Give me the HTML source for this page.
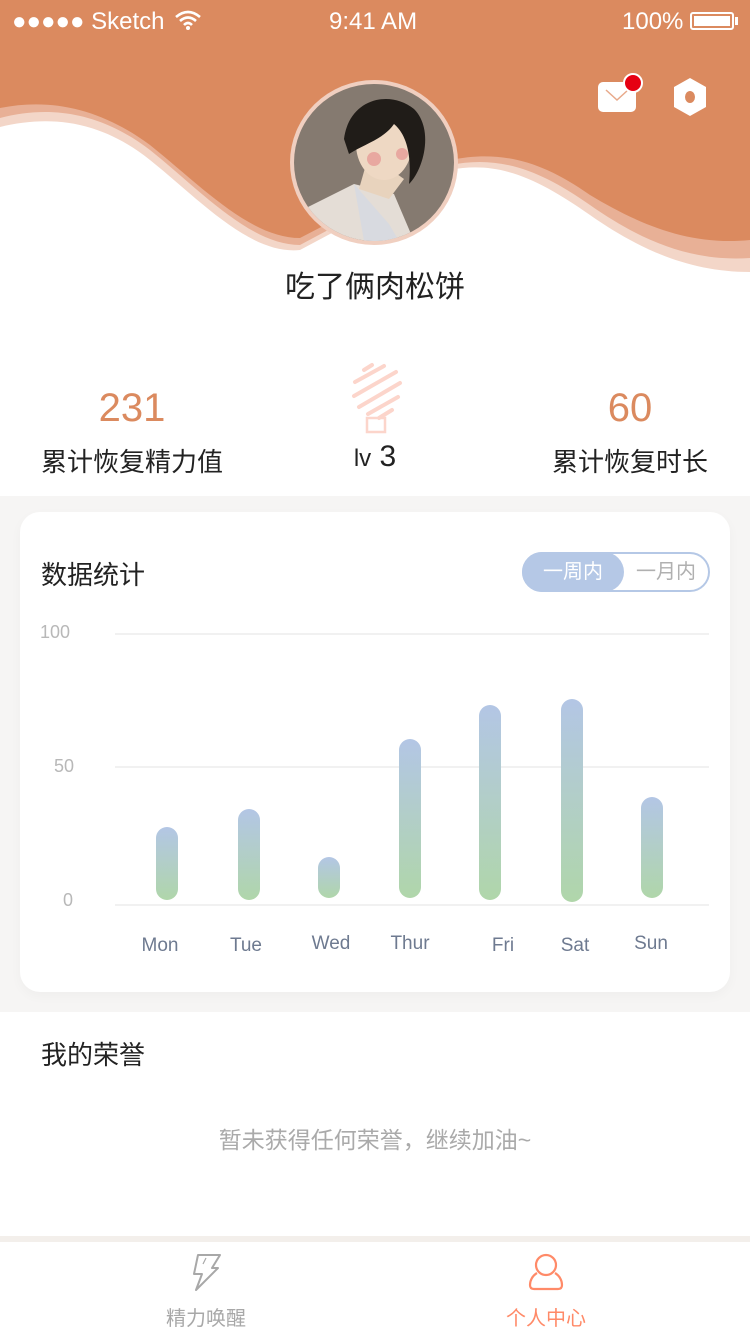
<!DOCTYPE html>
<html><head><meta charset="utf-8"><style>
*{margin:0;padding:0;box-sizing:border-box}
body{width:750px;height:1334px;position:relative;background:#fff;font-family:"Liberation Sans","Noto Sans CJK SC",sans-serif;overflow:hidden}
.abs{position:absolute}
.sb{color:#fff;font-size:24px;top:8px}
.bar{position:absolute;width:22px;border-radius:11px;background:linear-gradient(#b3c6e5,#b0d6aa)}
.day{position:absolute;top:935px;font-size:19px;color:#6e7a90;width:80px;text-align:center}
.yl{position:absolute;left:40px;font-size:18px;color:#b8b8b8}
.gl{position:absolute;left:115px;width:594px;height:2px;background:#f1f1f1}
</style></head><body>
<svg class="abs" style="left:0;top:0" width="750" height="300" viewBox="0 0 750 300">
<rect width="750" height="300" fill="#fff"/>
<path d="M0 0H750V272C690 272 640 250 590 215C540 180 500 160 450 170L300 250C250 255 200 200 150 160C100 120 50 115 0 127Z" fill="#f3d6c8"/>
<path d="M0 0H750V258C690 262 640 240 590 205C540 170 500 155 450 165L300 245C250 245 200 190 150 150C100 112 50 105 0 118Z" fill="#e8b096"/>
<path d="M0 0H750V240C690 246 640 225 590 195C540 160 500 150 450 160L300 238C250 238 200 185 150 145C100 108 50 98 0 108Z" fill="#db8a5f"/>
</svg>
<div class="abs sb" style="left:12px">●●●●● Sketch</div>
<svg class="abs" style="left:174px;top:10px" width="28" height="20" viewBox="0 0 28 20"><path d="M2 7Q14 -3 26 7M6 11Q14 4 22 11M10 15Q14 11 18 15" stroke="#fff" stroke-width="2.6" fill="none"/><circle cx="14" cy="18" r="2" fill="#fff"/></svg>
<div class="abs sb" style="left:329px">9:41 AM</div>
<div class="abs sb" style="left:622px">100%</div>
<div class="abs" style="left:690px;top:12px;width:44px;height:18px;border:2px solid #fff;border-radius:3px;padding:2px"><div style="background:#fff;width:100%;height:100%"></div></div>
<div class="abs" style="left:735px;top:17px;width:3px;height:8px;background:#fff"></div>
<div class="abs" style="left:598px;top:82px;width:38px;height:30px;background:#fff;border-radius:5px"></div>
<svg class="abs" style="left:598px;top:82px" width="38" height="30"><path d="M8 8L19 18L30 8" stroke="#e8a98a" stroke-width="1.5" fill="none"/></svg>
<div class="abs" style="left:623px;top:73px;width:20px;height:20px;border-radius:50%;background:#e60012;border:2px solid #fff"></div>
<svg class="abs" style="left:670px;top:76px" width="40" height="42"><path d="M20 2L36 11V31L20 40L4 31V11Z" fill="#fff"/><ellipse cx="20" cy="21" rx="5" ry="6" fill="#db8a5f"/></svg>
<div class="abs" style="left:290px;top:80px;width:168px;height:165px;border-radius:50%;background:#f0cfc0;padding:4px">
<svg width="160" height="157" viewBox="0 0 160 157" style="border-radius:50%;display:block"><rect width="160" height="157" fill="#857a70"/>
<path d="M10 125L60 100L100 110L120 157H20Z" fill="#e4ddd6"/><path d="M60 100L95 140L105 157L70 157Z" fill="#d8dae0"/>
<path d="M75 70L110 95L95 115L65 105Z" fill="#e8d3bd"/>
<ellipse cx="90" cy="60" rx="28" ry="36" fill="#eed8c3"/>
<path d="M50 55C55 15 95 5 120 25C140 45 130 85 115 100C118 70 112 50 100 40C90 55 70 60 55 70Z" fill="#201c18"/>
<circle cx="80" cy="75" r="7" fill="#e8a8a0"/><circle cx="108" cy="70" r="6" fill="#e8a8a0"/></svg></div>
<div class="abs" style="left:0;width:750px;top:262px;text-align:center;font-size:30px;color:#222">吃了俩肉松饼</div>
<div class="abs" style="left:0;top:496px;width:750px;height:516px;background:#f6f5f4"></div>
<div class="abs" style="left:4px;top:344px;width:746px;height:152px;background:#fff"></div>
<div class="abs" style="left:32px;width:200px;top:386px;text-align:center;font-size:40px;color:#db8a5f">231</div>
<div class="abs" style="left:30px;width:204px;top:442px;text-align:center;font-size:26px;color:#222">累计恢复精力值</div>
<div class="abs" style="left:530px;width:200px;top:386px;text-align:center;font-size:40px;color:#db8a5f">60</div>
<div class="abs" style="left:530px;width:200px;top:442px;text-align:center;font-size:26px;color:#222">累计恢复时长</div>
<svg class="abs" style="left:350px;top:362px" width="56" height="74"><g stroke="#fcd5cb" stroke-width="4" stroke-linecap="round"><path d="M14 8L22 3M5 20L34 4M4 34L46 10M9 45L50 21M18 52L48 35M29 56L42 48"/></g><rect x="17" y="56" width="18" height="14" fill="none" stroke="#fcd5cb" stroke-width="2.5"/></svg>
<div class="abs" style="left:330px;width:90px;top:440px;text-align:center;font-size:30px;color:#222"><span style="font-size:24px">lv</span> 3</div>
<div class="abs" style="left:20px;top:512px;width:710px;height:480px;background:#fff;border-radius:20px;box-shadow:0 4px 12px rgba(0,0,0,0.03)"></div>
<div class="abs" style="left:41px;top:555px;font-size:26px;color:#222">数据统计</div>
<div class="abs" style="left:522px;top:552px;width:188px;height:40px;border:2px solid #b5c8e6;border-radius:20px"></div>
<div class="abs" style="left:522px;top:552px;width:102px;height:40px;background:#b5c8e6;border-radius:20px;color:#fff;font-size:20px;line-height:40px;text-align:center">一周内</div>
<div class="abs" style="left:626px;top:552px;width:80px;height:40px;color:#b0b0b0;font-size:20px;line-height:40px;text-align:center">一月内</div>
<div class="yl" style="top:622px">100</div><div class="yl" style="left:54px;top:756px">50</div><div class="yl" style="left:63px;top:890px">0</div>
<div class="gl" style="top:633px"></div><div class="gl" style="top:766px"></div><div class="gl" style="top:904px"></div>
<div class="bar" style="left:156px;top:827px;height:73px"></div>
<div class="bar" style="left:238px;top:809px;height:91px"></div>
<div class="bar" style="left:318px;top:857px;height:41px"></div>
<div class="bar" style="left:399px;top:739px;height:159px"></div>
<div class="bar" style="left:479px;top:705px;height:195px"></div>
<div class="bar" style="left:561px;top:699px;height:203px"></div>
<div class="bar" style="left:641px;top:797px;height:101px"></div>
<div class="day" style="left:120px">Mon</div><div class="day" style="left:206px">Tue</div><div class="day" style="left:291px;top:933px">Wed</div><div class="day" style="left:370px;top:933px">Thur</div><div class="day" style="left:463px">Fri</div><div class="day" style="left:535px">Sat</div><div class="day" style="left:611px;top:933px">Sun</div>
<div class="abs" style="left:41px;top:1035px;font-size:26px;color:#222">我的荣誉</div>
<div class="abs" style="left:0;width:750px;top:1121px;text-align:center;font-size:23px;color:#aaa">暂未获得任何荣誉，继续加油~</div>
<div class="abs" style="left:0;top:1236px;width:750px;height:6px;background:#f3efeb"></div>
<svg class="abs" style="left:188px;top:1252px" width="36" height="40" viewBox="0 0 36 40"><path d="M10 3H32L24 16H30L8 38L14 22H6Z" fill="none" stroke="#a8a8a8" stroke-width="2" stroke-linejoin="round"/><path d="M18 6L15 12" stroke="#a8a8a8" stroke-width="1.2"/></svg>
<div class="abs" style="left:160px;width:92px;top:1302px;text-align:center;font-size:20px;color:#a8a8a8">精力唤醒</div>
<svg class="abs" style="left:526px;top:1252px" width="40" height="40" viewBox="0 0 40 40"><circle cx="20" cy="13" r="10" fill="none" stroke="#ff8a68" stroke-width="2.2"/><path d="M11 21C6 24 4 29 4 33Q4 37 8 37H32Q36 37 36 33C36 29 34 24 29 21" fill="none" stroke="#ff8a68" stroke-width="2.2"/></svg>
<div class="abs" style="left:500px;width:92px;top:1302px;text-align:center;font-size:20px;color:#ff8a68">个人中心</div>
</body></html>
